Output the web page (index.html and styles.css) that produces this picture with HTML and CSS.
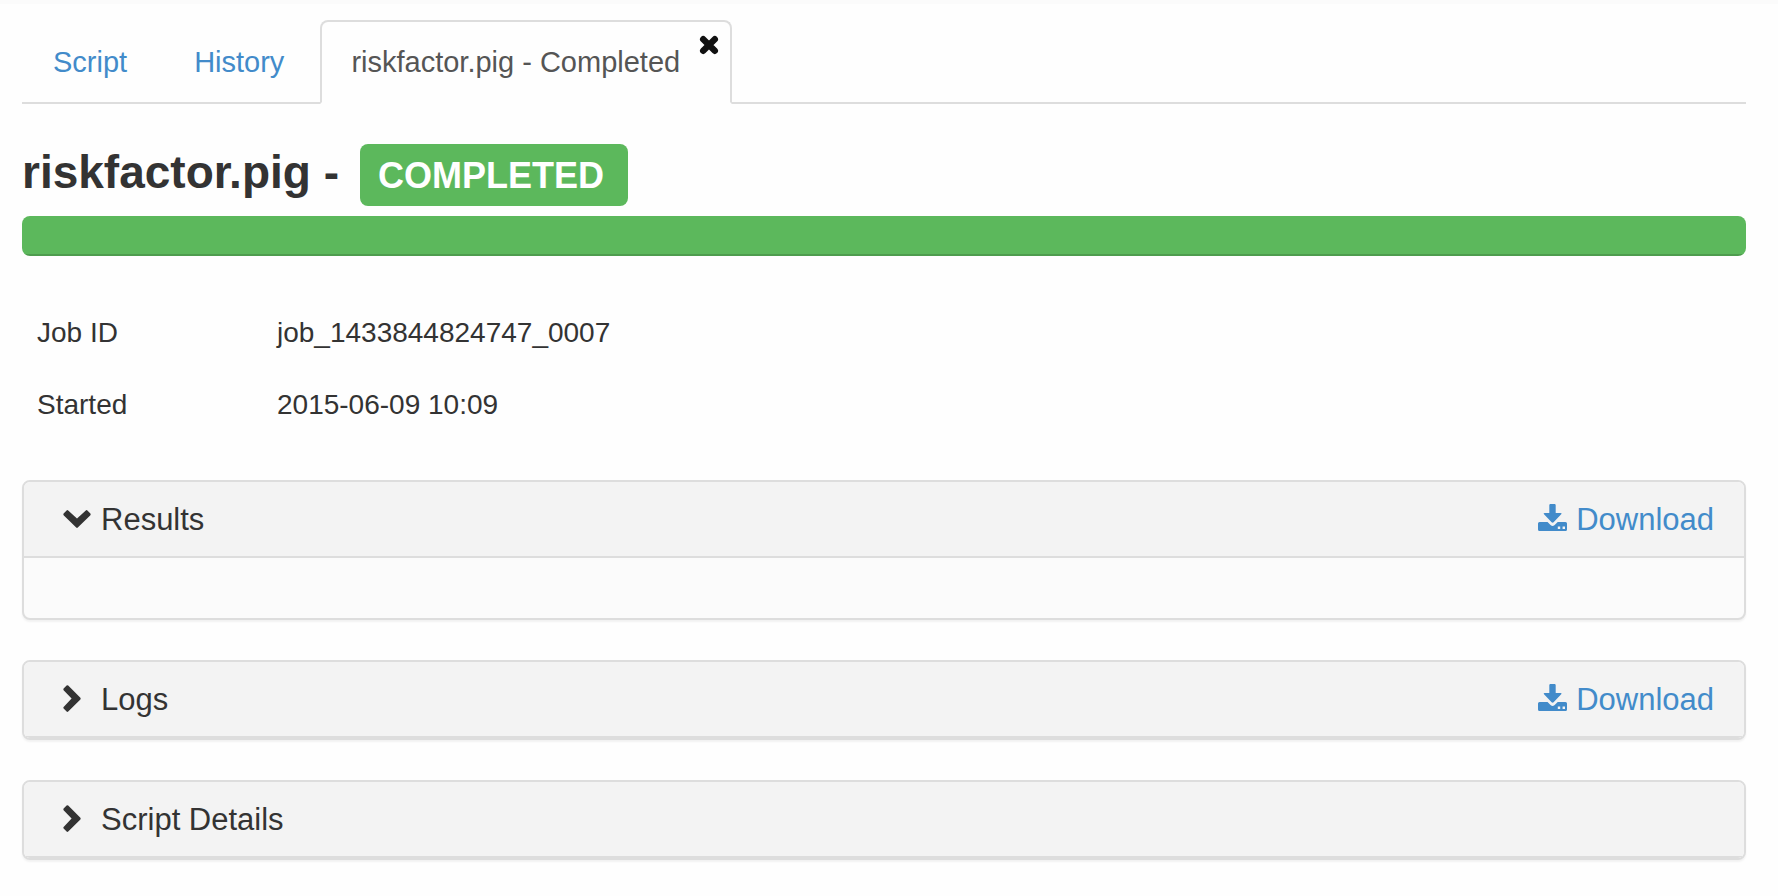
FILE: index.html
```
<!DOCTYPE html>
<html lang="en">
<head>
    <meta charset="UTF-8">
    <meta name="viewport" content="width=device-width, initial-scale=1.0">
    <title>riskfactor.pig - Completed</title>
    <link rel="stylesheet" href="styles.css">
</head>
<body>
    <!-- Tabs -->
    <ul class="nav-tabs">
        <li><a href="#script">Script</a></li>
        <li><a href="#history">History</a></li>
        <li class="active">
            <a href="#job">riskfactor.pig - Completed</a>
            <button type="button" class="close-tab" aria-label="Close">
                <svg viewBox="0 0 18 18" width="18" height="18"><path d="M3.200 3.200L14.800 14.800M14.800 3.200L3.200 14.800" fill="none" stroke="#111" stroke-width="6.400" stroke-linecap="round"/></svg>
            </button>
        </li>
    </ul>

    <h1 class="job-title">riskfactor.pig - <span class="label">COMPLETED</span></h1>
    <div class="progress"><div class="progress-bar" style="width: 100%"></div></div>

    <table class="job-info">
        <tr>
            <th scope="row">Job ID</th>
            <td>job_1433844824747_0007</td>
        </tr>
        <tr>
            <th scope="row">Started</th>
            <td>2015-06-09 10:09</td>
        </tr>
    </table>

    <!-- Panels -->
    <div class="panel">
        <div class="panel-heading">
            <button type="button" class="toggle" aria-expanded="true">
                <svg viewBox="0 0 28 28" width="28" height="28"><path d="M0.600 7.600L3.600 4.400Q4.400 3.800 5.200 4.400L14 12.600L22.800 4.400Q23.600 3.800 24.400 4.400L27.400 7.600Q28 8.400 27.400 9.200L14.800 21.600Q14 22.200 13.200 21.600L0.600 9.200Q0 8.400 0.600 7.600Z" fill="#333"/></svg>
                Results
            </button>
            <a class="download" href="#results">
                <svg viewBox="0 0 30 30" width="30" height="30"><path d="M12.500 2h4q1.200 0 1.200 1.200V11h4.800q1.800 0 .7 1.300l-7.600 8q-1 .9-2 0l-7.600-8Q5 11 6.700 11h4.600V3.200q0-1.200 1.200-1.200zM1.500 20H9.500l3.300 3.200q1.800 1.600 3.600 0l3.300-3.200H27.500q1.500 0 1.500 1.500v6q0 1.500-1.500 1.500h-26Q0 29 0 27.500v-6Q0 20 1.500 20zM19.800 24.500v2.500h2.400v-2.500zM24.600 24.500v2.500h2.400v-2.500z" fill="#428bca" fill-rule="evenodd"/></svg>
                Download
            </a>
        </div>
        <div class="panel-body"></div>
    </div>

    <div class="panel">
        <div class="panel-heading">
            <button type="button" class="toggle" aria-expanded="false">
                <svg viewBox="0 1 28 28" width="28" height="28"><path d="M3.600 0.600L0.600 3.600Q0 4.400 0.600 5.200L8.600 13.600L0.600 22Q0 22.800 0.600 23.600L3.600 26.600Q4.400 27.200 5.200 26.600L17.400 14.400Q18 13.600 17.400 12.800L5.200 0.600Q4.400 0 3.600 0.600Z" fill="#333"/></svg>
                Logs
            </button>
            <a class="download" href="#logs">
                <svg viewBox="0 0 30 30" width="30" height="30"><path d="M12.500 2h4q1.200 0 1.200 1.200V11h4.800q1.800 0 .7 1.300l-7.600 8q-1 .9-2 0l-7.600-8Q5 11 6.700 11h4.600V3.200q0-1.200 1.200-1.200zM1.500 20H9.500l3.300 3.200q1.800 1.600 3.600 0l3.300-3.200H27.500q1.500 0 1.500 1.500v6q0 1.500-1.500 1.500h-26Q0 29 0 27.500v-6Q0 20 1.500 20zM19.800 24.500v2.500h2.400v-2.500zM24.600 24.500v2.500h2.400v-2.500z" fill="#428bca" fill-rule="evenodd"/></svg>
                Download
            </a>
        </div>
    </div>

    <div class="panel">
        <div class="panel-heading">
            <button type="button" class="toggle" aria-expanded="false">
                <svg viewBox="0 1 28 28" width="28" height="28"><path d="M3.600 0.600L0.600 3.600Q0 4.400 0.600 5.200L8.600 13.600L0.600 22Q0 22.800 0.600 23.600L3.600 26.600Q4.400 27.200 5.200 26.600L17.400 14.400Q18 13.600 17.400 12.800L5.200 0.600Q4.400 0 3.600 0.600Z" fill="#333"/></svg>
                Script Details
            </button>
        </div>
    </div>
</body>
</html>
```
FILE: styles.css
```
* {
    box-sizing: border-box;
}
body {
    margin: 0;
    padding: 16px 32px 0 22px;
    border-top: 4px solid #fbfbfb;
    background-color: #fefefe;
    color: #333;
    font-family: "Liberation Sans", Arial, sans-serif;
    font-size: 28px;
    line-height: 40px;
}
a {
    color: #428bca;
    text-decoration: none;
}
button {
    padding: 0;
    border: none;
    background: none;
    color: inherit;
    font: inherit;
    cursor: pointer;
}
svg {
    display: block;
    overflow: visible;
}

/* Tabs */
.nav-tabs {
    display: flex;
    gap: 5px;
    margin: 0;
    padding: 0;
    list-style: none;
    border-bottom: 2px solid #ddd;
    font-size: 29px;
}
.nav-tabs li {
    position: relative;
    margin-bottom: -2px;
}
.nav-tabs a {
    display: block;
    padding: 20px 29px;
    border: 2px solid transparent;
    border-radius: 8px 8px 0 0;
}
.nav-tabs .active a {
    padding-right: 50px;
    border-color: #ddd;
    border-bottom-color: #fefefe;
    background-color: #fefefe;
    color: #555;
}
.close-tab {
    position: absolute;
    top: 16px;
    right: 14px;
}

/* Job header */
.job-title {
    display: flex;
    align-items: baseline;
    gap: 21px;
    margin: 40px 0 10px;
    font-size: 46px;
    font-weight: bold;
    line-height: 56px;
}
.label {
    padding: 12px 24px 10px 18px;
    border-radius: 8px;
    background-color: #5cb85c;
    color: #fff;
    font-size: 36px;
    line-height: 40px;
}
.progress {
    height: 40px;
    margin-bottom: 40px;
    border-radius: 8px;
    background-color: #f5f5f5;
    overflow: hidden;
}
.progress-bar {
    height: 100%;
    background-color: #5cb85c;
    box-shadow: inset 0 -2px 0 rgba(0, 0, 0, 0.15);
}

.job-info {
    width: 100%;
    margin-bottom: 40px;
    border-collapse: collapse;
}
.job-info th,
.job-info td {
    padding: 17px 15px 15px;
    font-weight: normal;
    text-align: left;
}
.job-info th {
    width: 240px;
}

/* Panels */
.panel {
    margin-bottom: 40px;
    border: 2px solid #ddd;
    border-radius: 8px;
    background-color: #fbfbfb;
    box-shadow: 0 2px 2px rgba(0, 0, 0, 0.05);
    overflow: hidden;
}
.panel-heading {
    display: flex;
    justify-content: space-between;
    padding: 20px 30px 18px 39px;
    border-bottom: 2px solid #ddd;
    background-color: #f3f3f3;
    font-size: 31px;
    line-height: 36px;
}
.panel-body {
    height: 60px;
}
.toggle {
    display: flex;
    align-items: center;
    gap: 10px;
}
.download {
    display: flex;
    align-items: flex-start;
    gap: 8px;
}
```
